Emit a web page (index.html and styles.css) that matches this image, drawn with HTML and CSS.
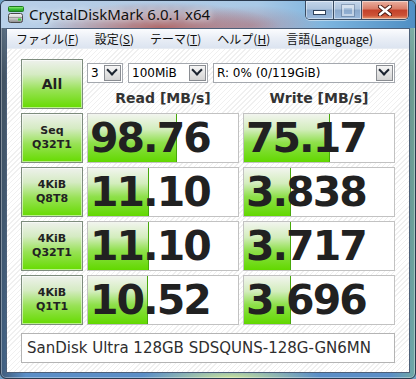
FILE: index.html
```html
<!DOCTYPE html>
<html lang="ja">
<head>
  <meta charset="UTF-8">
  <title>CrystalDiskMark 6.0.1 x64</title>
  <link rel="stylesheet" href="styles.css">
</head>
<body>

  <div class="window">
    <div class="titlebar">
      <svg class="app-icon" width="16" height="17" viewBox="0 0 16 17">
        <defs>
          <linearGradient id="gTop" x1="0" y1="0" x2="0" y2="1">
            <stop offset="0" stop-color="#9cf07c"/>
            <stop offset="0.5" stop-color="#3cc43a"/>
            <stop offset="1" stop-color="#1f8f22"/>
          </linearGradient>
          <linearGradient id="gDrive" x1="0" y1="0" x2="0" y2="1">
            <stop offset="0" stop-color="#f4f4f4"/>
            <stop offset="0.5" stop-color="#cfcfcf"/>
            <stop offset="1" stop-color="#8a8a8a"/>
          </linearGradient>
        </defs>
        <rect x="0.5" y="0.5" width="15" height="5" rx="1" fill="url(#gTop)" stroke="#1d7a1f"/>
        <rect x="0.5" y="7.5" width="14" height="9" rx="2" fill="url(#gDrive)" stroke="#4a4a4a"/>
        <line x1="1" y1="11.5" x2="14" y2="11.5" stroke="#9b9b9b"/>
        <rect x="10" y="12.5" width="3" height="2" fill="#2fd12f"/>
      </svg>
      <span class="title">CrystalDiskMark 6.0.1 x64</span>
      <div class="caption">
        <div class="cap cap-min"><span class="glyph-min"></span></div>
        <div class="cap cap-max"><span class="glyph-max"></span></div>
        <div class="cap cap-close">
          <svg width="14" height="11" viewBox="0 0 14 11">
            <path d="M2 1.5 L12 9.5 M12 1.5 L2 9.5" stroke="#4a1a12" stroke-width="4.4" stroke-linecap="round"/>
            <path d="M2 1.5 L12 9.5 M12 1.5 L2 9.5" stroke="#fff" stroke-width="2.4" stroke-linecap="round"/>
          </svg>
        </div>
      </div>
    </div>

    <div class="client">
      <ul class="menubar">
        <li>ファイル(<u>F</u>)</li>
        <li>設定(<u>S</u>)</li>
        <li>テーマ(<u>T</u>)</li>
        <li>ヘルプ(<u>H</u>)</li>
        <li>言語(<u>L</u>anguage)</li>
      </ul>

      <div class="main">
        <div class="grid">
          <div class="btn btn-all">All</div>
          <div class="top">
            <div class="combos">
              <div class="combo combo-count"><span>3</span><i class="arrow"></i></div>
              <div class="combo combo-size"><span>100MiB</span><i class="arrow"></i></div>
              <div class="combo combo-drive"><span>R: 0% (0/119GiB)</span><i class="arrow"></i></div>
            </div>
            <div class="heads">
              <div>Read [MB/s]</div>
              <div>Write [MB/s]</div>
            </div>
          </div>

          <div class="btn">Seq<br>Q32T1</div>
          <div class="val" style="--w: 89px">98.76</div>
          <div class="val" style="--w: 86px">75.17</div>

          <div class="btn">4KiB<br>Q8T8</div>
          <div class="val" style="--w: 61px">11.10</div>
          <div class="val" style="--w: 47px">3.838</div>

          <div class="btn">4KiB<br>Q32T1</div>
          <div class="val" style="--w: 61px">11.10</div>
          <div class="val" style="--w: 47px">3.717</div>

          <div class="btn">4KiB<br>Q1T1</div>
          <div class="val" style="--w: 60px">10.52</div>
          <div class="val" style="--w: 47px">3.696</div>
        </div>

        <div class="comment">SanDisk Ultra 128GB SDSQUNS-128G-GN6MN</div>
      </div>
    </div>
  </div>

</body>
</html>
```

FILE: styles.css
```css
body {
  margin: 0;
  background: #6f9fc4;
}

.window {
  width: 416px;
  height: 379px;
  box-sizing: border-box;
  border: 1px solid #2a3a4e;
  border-radius: 6px;
  display: flex;
  flex-direction: column;
  background:
    radial-gradient(ellipse 90px 14px at 230px 100%, rgba(214, 236, 150, 0.9), transparent),
    linear-gradient(to right, rgba(40, 50, 60, 0.55), transparent 6%, transparent 94%, rgba(120, 180, 150, 0.7)),
    linear-gradient(to bottom, #9cbcdc 0%, #5d7388 20%, #587a9c 55%, #5b8fc8 100%);
  box-shadow: inset 0 0 0 1px rgba(255, 255, 255, 0.35);
  overflow: hidden;
}

/* title bar */

.titlebar {
  height: 27px;
  display: flex;
  align-items: flex-start;
  background:
    radial-gradient(ellipse 120px 26px at 160px 100%, rgba(178, 88, 84, 0.85), transparent),
    radial-gradient(ellipse 70px 20px at 250px 90%, rgba(170, 110, 120, 0.5), transparent),
    linear-gradient(to right, #b8d0e9 0%, #b4cbe4 30%, #a9c9e6 62%, #79b2dd 80%, #4f8fc4 100%);
}

.app-icon {
  margin: 5px 0 0 7px;
}

.title {
  margin: 3px 0 0 5px;
  font-family: "Noto Sans", sans-serif;
  font-size: 15px;
  line-height: 20px;
  color: #101010;
  text-shadow: 0 0 6px rgba(255, 255, 255, 0.8), 0 0 10px rgba(255, 255, 255, 0.5);
}

.caption {
  display: flex;
  margin-left: auto;
  margin-right: 6px;
  height: 18px;
  border: 1px solid #3a4c62;
  border-top: none;
  border-radius: 0 0 5px 5px;
  overflow: hidden;
  box-shadow: 0 1px 0 rgba(255, 255, 255, 0.45);
}

.cap {
  display: flex;
  align-items: center;
  justify-content: center;
  box-shadow: inset 0 0 0 1px rgba(255, 255, 255, 0.45);
}

.cap-min,
.cap-max {
  width: 27px;
  border-right: 1px solid #3a4c62;
  background: linear-gradient(#c3d5ea 0%, #adc3dc 45%, #8aa8cb 50%, #9ab9dc 100%);
}

.cap-close {
  width: 46px;
  background: linear-gradient(#eab0a0 0%, #d97c66 45%, #c3412a 50%, #cc5236 80%, #e59a72 100%);
}

.glyph-min {
  width: 11px;
  height: 3px;
  margin-top: 4px;
  background: #fff;
  border: 1px solid #2f415a;
}

.glyph-max {
  width: 8px;
  height: 6px;
  border: 2px solid rgba(255, 255, 255, 0.45);
  border-top-width: 3px;
  outline: 1px solid rgba(60, 80, 110, 0.35);
}

/* client */

.client {
  flex: 1;
  margin: 0 5px 5px;
  border: 1px solid #4d6079;
  display: flex;
  flex-direction: column;
}

.menubar {
  height: 20px;
  margin: 0;
  padding: 0 0 0 9px;
  list-style: none;
  display: flex;
  gap: 16px;
  align-items: center;
  background: linear-gradient(#fbfcfe, #e9eef6 50%, #dce4f0);
  border-bottom: 1px solid #e6ebf2;
  box-sizing: border-box;
  font-family: "Noto Sans CJK JP", sans-serif;
  font-size: 12px;
  color: #111;
}

.main {
  flex: 1;
  padding: 10px 14px 0;
  background-color: #fff;
  background-image: repeating-linear-gradient(135deg, #fff 0 2.6px, #f0f0f0 2.6px 3.6px);
}

.grid {
  display: grid;
  grid-template-columns: 62px 152px 152px;
  grid-template-rows: repeat(5, 50px);
  gap: 4px;
}

.btn {
  box-sizing: border-box;
  border: 1px solid #7d8c7d;
  box-shadow: inset 0 0 0 1px rgba(255, 255, 255, 0.55);
  background: linear-gradient(#eef1ec 0%, #d5ebc3 30%, #98e256 62%, #66db00 100%);
  display: flex;
  align-items: center;
  justify-content: center;
  text-align: center;
  font-family: "DejaVu Sans", sans-serif;
  font-weight: bold;
  font-size: 11px;
  line-height: 14px;
  color: #222;
}

.btn-all {
  font-size: 14px;
}

.top {
  grid-column: 2 / 4;
  display: flex;
  flex-direction: column;
}

.combos {
  display: flex;
  gap: 5px;
  margin-top: 4px;
}

.combo {
  height: 20px;
  box-sizing: border-box;
  border: 1px solid #a4a8ae;
  background: #fff;
  display: flex;
  align-items: center;
  justify-content: space-between;
  font-family: "DejaVu Sans", sans-serif;
  font-size: 12px;
  color: #000;
}

.combo span {
  padding-left: 3px;
}

.combo-count { width: 36px; }
.combo-size { width: 80px; }
.combo-drive { width: 182px; }

.arrow {
  width: 17px;
  height: 16px;
  margin-right: 1px;
  box-sizing: border-box;
  border: 1px solid #8a8d92;
  background: linear-gradient(#f6f6f6, #e4e4e4 50%, #d4d4d4);
  position: relative;
}

.arrow::after {
  content: "";
  position: absolute;
  left: 3px;
  top: 0;
  width: 6px;
  height: 6px;
  border-right: 2px solid #1c2430;
  border-bottom: 2px solid #1c2430;
  transform: rotate(45deg);
}

.heads {
  display: grid;
  grid-template-columns: 152px 152px;
  gap: 4px;
  margin-top: 4px;
  height: 22px;
  line-height: 22px;
  text-align: center;
  font-family: "DejaVu Sans", sans-serif;
  font-weight: bold;
  font-size: 14px;
  color: #333;
}

.val {
  box-sizing: border-box;
  border: 1px solid #c2c2c2;
  padding-left: 2px;
  background:
    linear-gradient(to right, transparent calc(var(--w) - 1px), #47a80a calc(var(--w) - 1px), #47a80a var(--w), transparent var(--w)),
    linear-gradient(#f2f5ef 0%, #d3edbd 32%, #8ee04a 60%, #62d800 100%) 0 0 / var(--w) 100% no-repeat,
    #fff;
  font-family: "DejaVu Sans", sans-serif;
  font-weight: bold;
  font-size: 41px;
  line-height: 48px;
  letter-spacing: -2px;
  color: #212121;
}

.comment {
  margin-top: 8px;
  height: 30px;
  box-sizing: border-box;
  border: 1px solid #b4b4b4;
  background: #fff;
  padding-left: 5px;
  font-family: "DejaVu Sans", sans-serif;
  font-size: 15px;
  line-height: 28px;
  color: #2e2e2e;
}
```
